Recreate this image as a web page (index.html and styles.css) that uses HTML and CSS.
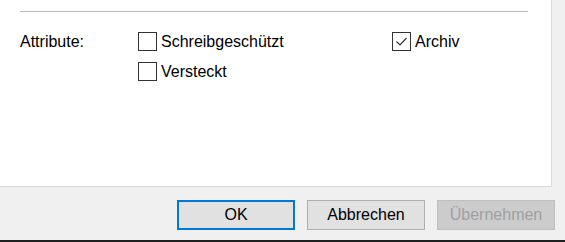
FILE: index.html
```html
<!DOCTYPE html>
<html lang="de">
<head>
    <meta charset="UTF-8">
    <title>Eigenschaften</title>
    <link rel="stylesheet" href="styles.css">
</head>
<body>
    <div class="dialog">
        <div class="panel">
            <!-- Zeile darüber ist nur angeschnitten -->
            <div class="prev-row">Zugriff:</div>
            <div class="separator"></div>

            <div class="attr-row">
                <div class="attr-label">Attribute:</div>
                <div class="attr-col">
                    <label class="check"><span class="box"></span>Schreibgeschützt</label>
                    <label class="check"><span class="box"></span>Versteckt</label>
                </div>
                <div class="attr-col attr-col-last">
                    <label class="check">
                        <span class="box">
                            <svg width="17" height="17" viewBox="0 0 17 17">
                                <polyline points="3.5,8.5 7,12 13.5,5" fill="none" stroke="#333" stroke-width="1.2"/>
                            </svg>
                        </span>Archiv
                    </label>
                </div>
            </div>
        </div>

        <div class="buttons">
            <button class="btn btn-default">OK</button>
            <button class="btn">Abbrechen</button>
            <button class="btn" disabled>Übernehmen</button>
        </div>
    </div>
    <div class="taskbar"></div>
</body>
</html>
```

FILE: styles.css
```css
body {
    margin: 0;
    font-family: "Liberation Sans", Arial, sans-serif;
    font-size: 16px;
    color: #000;
    background: #f0f0f0;
    height: 242px;
    overflow: hidden;
}

.dialog {
    height: 240px;
}

.panel {
    background: #fff;
    height: 186px;
    margin-right: 13px;
    border-right: 1px solid #d9d9d9;
    border-bottom: 1px solid #d9d9d9;
    padding-left: 20px;
    overflow: hidden;
}

.prev-row {
    margin-top: -17px;
    line-height: 18px;
    height: 18px;
}

.separator {
    margin-top: 10px;
    width: 508px;
    border-top: 1px solid #bcbcbc;
}

.attr-row {
    display: flex;
    margin-top: 20px;
}

.attr-label {
    flex: 0 0 118px;
    line-height: 18px;
    padding-top: 1px;
}

.attr-col {
    flex: 0 0 254px;
    display: flex;
    flex-direction: column;
    gap: 11px;
}

.attr-col-last {
    flex: 1 1 auto;
}

.check {
    display: flex;
    align-items: center;
    gap: 4px;
    line-height: 19px;
}

.box {
    box-sizing: border-box;
    flex: 0 0 19px;
    width: 19px;
    height: 19px;
    border: 1px solid #333;
    background: #fff;
    display: block;
}

.box svg {
    display: block;
}

.buttons {
    display: flex;
    justify-content: flex-end;
    gap: 12px;
    padding-right: 10px;
    margin-top: 13px;
}

.btn {
    box-sizing: border-box;
    width: 118px;
    height: 30px;
    font-family: inherit;
    font-size: 16px;
    color: #000;
    background: #e1e1e1;
    border: 1px solid #adadad;
    padding: 0;
}

.btn-default {
    border: 2px solid #0078d7;
}

.btn:disabled {
    background: #cccccc;
    border-color: #bfbfbf;
    color: #a0a0a0;
}

.taskbar {
    height: 2px;
    background: #1f1f1f;
}
```
